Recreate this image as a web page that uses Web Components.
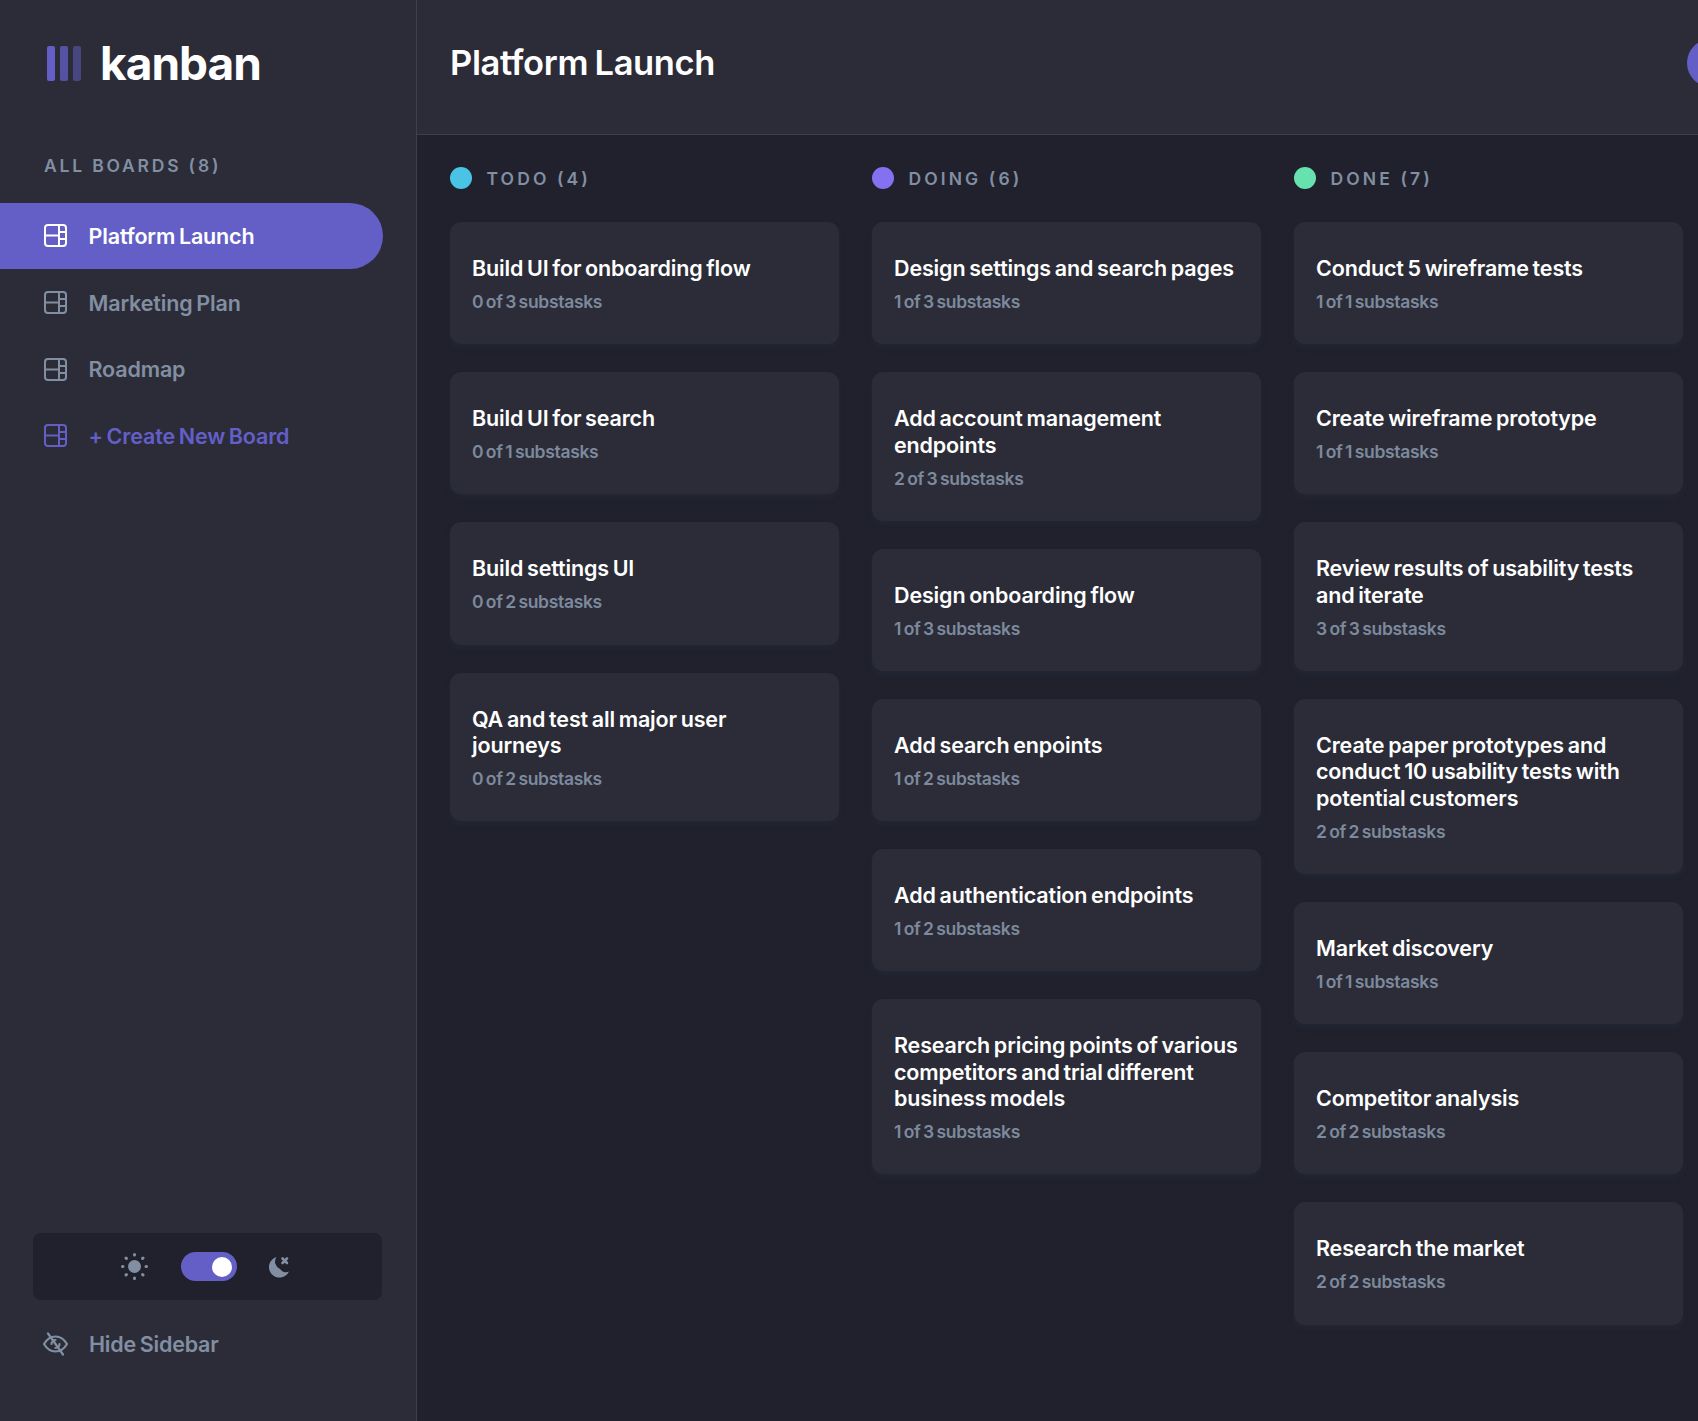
<!DOCTYPE html>
<html>
<head>
<meta charset="utf-8">
<style>
  html, body { margin: 0; height: 100%; background: #20212c; }
  body { font-family: Inter, "Liberation Sans", sans-serif; overflow: hidden; }
</style>
</head>
<body>
<kanban-app>
  <kanban-sidebar slot="sidebar">
    <board-link active>Platform Launch</board-link>
    <board-link>Marketing Plan</board-link>
    <board-link>Roadmap</board-link>
    <board-link create>+ Create New Board</board-link>
  </kanban-sidebar>
  <kanban-header slot="header">Platform Launch</kanban-header>
  <kanban-column name="TODO (4)" color="#49c4e5">
    <task-card title="Build UI for onboarding flow" sub="0 of 3 substasks"></task-card>
    <task-card title="Build UI for search" sub="0 of 1 substasks"></task-card>
    <task-card title="Build settings UI" sub="0 of 2 substasks"></task-card>
    <task-card title="QA and test all major user journeys" sub="0 of 2 substasks"></task-card>
  </kanban-column>
  <kanban-column name="DOING (6)" color="#8471f2">
    <task-card title="Design settings and search pages" sub="1 of 3 substasks"></task-card>
    <task-card title="Add account management endpoints" sub="2 of 3 substasks"></task-card>
    <task-card title="Design onboarding flow" sub="1 of 3 substasks"></task-card>
    <task-card title="Add search enpoints" sub="1 of 2 substasks"></task-card>
    <task-card title="Add authentication endpoints" sub="1 of 2 substasks"></task-card>
    <task-card title="Research pricing points of various competitors and trial different business models" sub="1 of 3 substasks"></task-card>
  </kanban-column>
  <kanban-column name="DONE (7)" color="#67e2ae">
    <task-card title="Conduct 5 wireframe tests" sub="1 of 1 substasks"></task-card>
    <task-card title="Create wireframe prototype" sub="1 of 1 substasks"></task-card>
    <task-card title="Review results of usability tests and iterate" sub="3 of 3 substasks"></task-card>
    <task-card title="Create paper prototypes and conduct 10 usability tests with potential customers" sub="2 of 2 substasks"></task-card>
    <task-card title="Market discovery" sub="1 of 1 substasks"></task-card>
    <task-card title="Competitor analysis" sub="2 of 2 substasks"></task-card>
    <task-card title="Research the market" sub="2 of 2 substasks"></task-card>
  </kanban-column>
</kanban-app>

<script>
(function () {
    const boardIcon = `
      <svg width="23" height="23" viewBox="0 0 23 23" fill="none" stroke="currentColor" stroke-width="2">
        <rect x="1" y="1" width="21" height="21" rx="3"/>
        <path d="M1 11.5h14M15 1v21M15 8h7M15 15h7"/>
      </svg>`;

    class KanbanApp extends HTMLElement {
        constructor() {
            super();
            this.attachShadow({ mode: 'open' }).innerHTML = `
              <style>
                :host { display: grid; grid-template-columns: 417px minmax(0, 1fr); grid-template-rows: 135px minmax(0, 1fr); height: 100vh; overflow: hidden; }
                ::slotted([slot=sidebar]) { grid-row: 1 / 3; }
                .board { display: flex; gap: 33px; padding: 32px 0 0 33px; overflow: hidden; }
              </style>
              <slot name="sidebar"></slot>
              <slot name="header"></slot>
              <div class="board"><slot></slot></div>`;
        }
    }

    class KanbanSidebar extends HTMLElement {
        constructor() {
            super();
            this.attachShadow({ mode: 'open' }).innerHTML = `
              <style>
                :host { display: flex; flex-direction: column; background: #2b2c37; border-right: 1px solid #3e3f4e; box-sizing: border-box; }
                .logo { display: flex; align-items: center; gap: 19px; height: 126px; padding-left: 46px; box-sizing: border-box; color: #fff; font-size: 46px; font-weight: 700; letter-spacing: -1px; }
                .label { margin: 29px 0 0 44px; height: 47.5px; color: #828fa3; font-size: 17.5px; font-weight: 600; letter-spacing: 2.8px; }
                nav { display: flex; flex-direction: column; width: 383px; }
                .spacer { flex: 1; }
                .theme { display: flex; align-items: center; justify-content: center; gap: 31px; height: 67px; margin: 0 34px 0 33px; padding-right: 4px; border-radius: 8px; background: #20212c; color: #828fa3; }
                .toggle { display: flex; align-items: center; justify-content: flex-end; width: 56px; height: 29px; margin: 0 -2px 0 2px; padding: 0 5px; box-sizing: border-box; border-radius: 15px; background: #635fc7; }
                .toggle i { width: 20px; height: 20px; border-radius: 50%; background: #fff; }
                .hide { display: flex; align-items: center; gap: 20px; height: 46px; margin: 21px 0 54px; padding-left: 42px; color: #828fa3; font-size: 21.5px; font-weight: 600; letter-spacing: -0.2px; word-spacing: -1.5px; }
              </style>
              <div class="logo">
                <svg width="35" height="35" viewBox="0 0 35 35">
                  <rect x="1" y="0" width="8" height="35" rx="2" fill="#635fc7"/>
                  <rect x="14" y="0" width="8" height="35" rx="2" fill="#635fc7" opacity=".75"/>
                  <rect x="27" y="0" width="8" height="35" rx="2" fill="#635fc7" opacity=".5"/>
                </svg>
                <span>kanban</span>
              </div>
              <div class="label">ALL BOARDS (8)</div>
              <nav><slot></slot></nav>
              <div class="spacer"></div>
              <div class="theme">
                <svg width="27" height="27" viewBox="0 0 27 27" fill="currentColor">
                  <circle cx="13.5" cy="13.5" r="6.5"/>
                  <g stroke="currentColor" stroke-width="3" stroke-linecap="round">
                    <path d="M13.5 1.5v.5M13.5 25v.5M1.5 13.5h.5M25 13.5h.5M5 5l.4.4M21.6 21.6l.4.4M5 22l.4-.4M21.6 5.4l.4-.4"/>
                  </g>
                </svg>
                <div class="toggle"><i></i></div>
                <svg width="24" height="22" viewBox="0 0 24 22" fill="currentColor">
                  <path d="M10.5 1A10.5 10.5 0 1 0 23 15.5 7 7 0 0 1 14 13 8 8 0 0 1 10.5 1z"/>
                  <path d="M16.5 2.5l4.5 4.5M21 2.5L16.5 7" stroke="currentColor" stroke-width="2.6" stroke-linecap="round"/>
                </svg>
              </div>
              <div class="hide">
                <svg width="27" height="24" viewBox="0 0 27 24" fill="none" stroke="currentColor" stroke-width="2.2" stroke-linecap="round" stroke-linejoin="round">
                  <path d="M2 12C5 7 9 4.5 13.5 4.5S22 7 25 12C22 17 18 19.5 13.5 19.5S5 17 2 12z"/>
                  <path d="M9.5 12a4 4 0 0 1 4-4M17.5 12a4 4 0 0 1-4 4"/>
                  <path d="M6 1.5L21 22.5"/>
                </svg>
                <span>Hide Sidebar</span>
              </div>`;
        }
    }

    class BoardLink extends HTMLElement {
        constructor() {
            super();
            this.attachShadow({ mode: 'open' }).innerHTML = `
              <style>
                :host { display: flex; align-items: center; gap: 21.5px; height: 66.7px; padding-left: 44px; box-sizing: border-box; border-radius: 0 34px 34px 0; color: #828fa3; font-size: 21.5px; font-weight: 600; letter-spacing: -0.15px; word-spacing: -1.5px; }
                :host([active]) { background: #635fc7; color: #fff; }
                :host([create]) { color: #635fc7; }
              </style>
              ${boardIcon}
              <span><slot></slot></span>`;
        }
    }

    class KanbanHeader extends HTMLElement {
        constructor() {
            super();
            this.attachShadow({ mode: 'open' }).innerHTML = `
              <style>
                :host { display: flex; align-items: center; justify-content: space-between; background: #2b2c37; border-bottom: 1px solid #3e3f4e; box-sizing: border-box; padding: 0 0 9px 33px; overflow: hidden; color: #fff; font-size: 34.5px; font-weight: 600; letter-spacing: -0.35px; word-spacing: -2px; }
                .action { flex: none; width: 60px; height: 48px; margin: 0 -49px 0 0; border-radius: 24px; background: #635fc7; }
              </style>
              <span><slot></slot></span>
              <div class="action"></div>`;
        }
    }

    class KanbanColumn extends HTMLElement {
        constructor() {
            super();
            this.attachShadow({ mode: 'open' }).innerHTML = `
              <style>
                :host { display: block; flex: none; width: 389px; }
                .head { display: flex; align-items: center; gap: 14.5px; height: 22px; margin-bottom: 33px; color: #828fa3; font-size: 17.5px; font-weight: 600; letter-spacing: 3.1px; }
                .dot { width: 22px; height: 22px; border-radius: 50%; background: var(--dot); }
                .list { display: flex; flex-direction: column; gap: 28px; }
              </style>
              <div class="head"><span class="dot"></span><span class="name"></span></div>
              <div class="list"><slot></slot></div>`;
        }

        connectedCallback() {
            this.shadowRoot.querySelector('.name').textContent = this.getAttribute('name');
            this.style.setProperty('--dot', this.getAttribute('color'));
        }
    }

    class TaskCard extends HTMLElement {
        constructor() {
            super();
            this.attachShadow({ mode: 'open' }).innerHTML = `
              <style>
                :host { display: block; padding: 33px 22.5px 31.2px 22px; border-radius: 11px; background: #2b2c37; box-shadow: 0 4px 6px rgba(54, 78, 126, .1); }
                .title { color: #fff; font-size: 21.5px; font-weight: 600; line-height: 26.4px; letter-spacing: -0.15px; word-spacing: -1.5px; }
                .sub { margin-top: 9.6px; color: #7d899d; font-size: 17.5px; font-weight: 600; line-height: 22px; letter-spacing: -0.32px; word-spacing: -1.5px; }
              </style>
              <div class="title"></div>
              <div class="sub"></div>`;
        }

        connectedCallback() {
            this.shadowRoot.querySelector('.title').textContent = this.getAttribute('title');
            this.shadowRoot.querySelector('.sub').textContent = this.getAttribute('sub');
            this.removeAttribute('title');
        }
    }

    customElements.define('kanban-app', KanbanApp);
    customElements.define('kanban-sidebar', KanbanSidebar);
    customElements.define('board-link', BoardLink);
    customElements.define('kanban-header', KanbanHeader);
    customElements.define('kanban-column', KanbanColumn);
    customElements.define('task-card', TaskCard);
}())
</script>
</body>
</html>
